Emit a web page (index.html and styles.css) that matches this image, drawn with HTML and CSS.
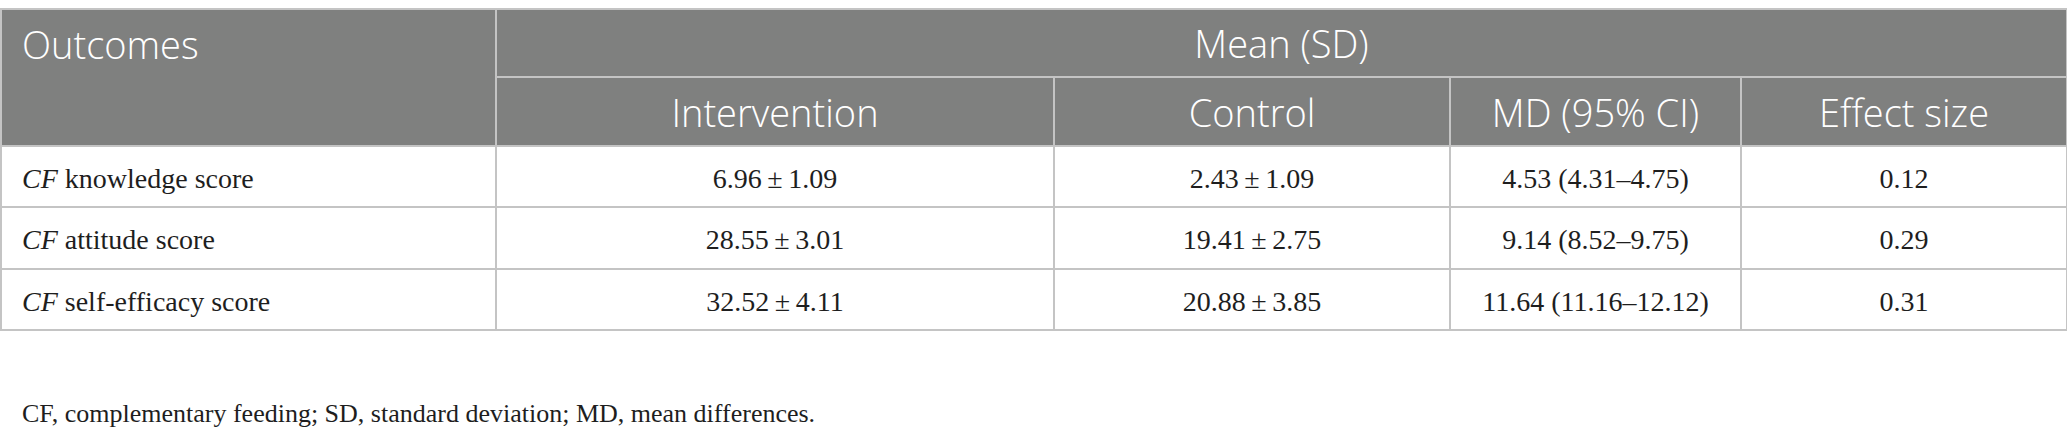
FILE: index.html
```html
<!DOCTYPE html>
<html lang="en">
<head>
<meta charset="utf-8">
<title>Table</title>
<link rel="stylesheet" href="styles.css">
</head>
<body>
<table class="data">
  <colgroup>
    <col class="c1"><col class="c2"><col class="c3"><col class="c4"><col class="c5">
  </colgroup>
  <thead>
    <tr class="h1">
      <th class="left" rowspan="2">Outcomes</th>
      <th colspan="4">Mean (SD)</th>
    </tr>
    <tr class="h2">
      <th>Intervention</th>
      <th>Control</th>
      <th>MD (95% CI)</th>
      <th>Effect size</th>
    </tr>
  </thead>
  <tbody>
    <tr class="r1">
      <td class="left"><i>CF</i> knowledge score</td>
      <td>6.96&#8201;±&#8201;1.09</td>
      <td>2.43&#8201;±&#8201;1.09</td>
      <td>4.53 (4.31–4.75)</td>
      <td>0.12</td>
    </tr>
    <tr class="r2">
      <td class="left"><i>CF</i> attitude score</td>
      <td>28.55&#8201;±&#8201;3.01</td>
      <td>19.41&#8201;±&#8201;2.75</td>
      <td>9.14 (8.52–9.75)</td>
      <td>0.29</td>
    </tr>
    <tr class="r3">
      <td class="left"><i>CF</i> self-efficacy score</td>
      <td>32.52&#8201;±&#8201;4.11</td>
      <td>20.88&#8201;±&#8201;3.85</td>
      <td>11.64 (11.16–12.12)</td>
      <td>0.31</td>
    </tr>
  </tbody>
</table>
<p class="note">CF, complementary feeding; SD, standard deviation; MD, mean differences.</p>
</body>
</html>
```
FILE: styles.css
```css
html, body {
  margin: 0;
  padding: 0;
  background: #ffffff;
}

body {
  padding-top: 8px;
}

.data {
  border-collapse: collapse;
  table-layout: fixed;
  width: 2066px;
}

.c1 { width: 495px; }
.c2 { width: 558px; }
.c3 { width: 396px; }
.c4 { width: 291px; }
.c5 { width: 326px; }

.data th,
.data td {
  border: 2px solid #c4c4c4;
  padding: 0 20px;
  text-align: center;
  vertical-align: middle;
}

.data th {
  background: #7f807f;
  color: #ffffff;
  font-family: "Open Sans", "Noto Sans", sans-serif;
  font-weight: 350;
  font-size: 38px;
  line-height: 50px;
}

.data th.left {
  text-align: left;
  vertical-align: top;
  padding-top: 9px;
}

.h1 { height: 68px; }
.h2 { height: 69px; }
.r1 { height: 61px; }
.r2 { height: 62px; }
.r3 { height: 61px; }

.data td {
  font-family: "Liberation Serif", "Times New Roman", serif;
  font-size: 28px;
  line-height: 36px;
  padding-top: 4px;
  color: #1e1e1e;
  background: #ffffff;
}

.data td.left {
  text-align: left;
}

.note {
  margin: 68px 0 0 22px;
  font-family: "Liberation Serif", "Times New Roman", serif;
  font-size: 26px;
  color: #1e1e1e;
}
```
